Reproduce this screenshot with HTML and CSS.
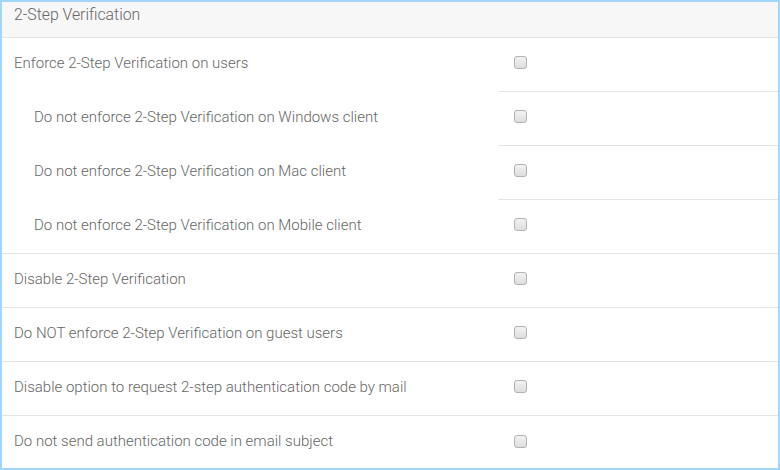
FILE: index.html
```html
<!DOCTYPE html>
<html>
<head>
<meta charset="utf-8">
<link rel="stylesheet" href="styles.css">
</head>
<body>
<div class="panel">
  <div class="header">2-Step Verification</div>
  <div class="row group">
    <div class="label">Enforce 2-Step Verification on users</div>
    <div class="ctrl"><input type="checkbox" class="cb"></div>
  </div>
  <div class="row group">
    <div class="label sub">Do not enforce 2-Step Verification on Windows client</div>
    <div class="ctrl"><input type="checkbox" class="cb"></div>
  </div>
  <div class="row group">
    <div class="label sub">Do not enforce 2-Step Verification on Mac client</div>
    <div class="ctrl"><input type="checkbox" class="cb"></div>
  </div>
  <div class="row">
    <div class="label sub">Do not enforce 2-Step Verification on Mobile client</div>
    <div class="ctrl"><input type="checkbox" class="cb"></div>
  </div>
  <div class="row">
    <div class="label">Disable 2-Step Verification</div>
    <div class="ctrl"><input type="checkbox" class="cb"></div>
  </div>
  <div class="row">
    <div class="label">Do NOT enforce 2-Step Verification on guest users</div>
    <div class="ctrl"><input type="checkbox" class="cb"></div>
  </div>
  <div class="row">
    <div class="label">Disable option to request 2-step authentication code by mail</div>
    <div class="ctrl"><input type="checkbox" class="cb"></div>
  </div>
  <div class="row last">
    <div class="label">Do not send authentication code in email subject</div>
    <div class="ctrl"><input type="checkbox" class="cb"></div>
  </div>
</div>
</body>
</html>
```
FILE: styles.css
```css
html, body {
  margin: 0;
  padding: 0;
  background: #fff;
}
.panel {
  width: 780px;
  height: 470px;
  box-sizing: border-box;
  border: 2px solid #a2d5fb;
  overflow: hidden;
  font-family: Roboto, "Liberation Sans", sans-serif;
  font-weight: 300;
  font-size: 15px;
  color: #666;
}
.header {
  box-sizing: border-box;
  border-bottom: 1px solid #e4e4e4;
  background: #f7f7f7;
  padding-left: 12px;
  line-height: 26px;
  height: 36px;
  font-size: 15.8px;
}
.row {
  display: grid;
  grid-template-columns: 496px 1fr;
  height: 54px;
}
.row > div {
  box-sizing: border-box;
  border-bottom: 1px solid #e4e4e4;
  display: flex;
  align-items: center;
  padding-bottom: 4px;
}
.row.group > .label {
  border-bottom-color: transparent;
}
.row.last {
  height: 52px;
}
.row.last > div {
  border-bottom: none;
  padding-bottom: 2px;
}
.label {
  padding-left: 12px;
}
.label.sub {
  padding-left: 32px;
}
.ctrl {
  padding-left: 16px;
}
.cb {
  appearance: none;
  -webkit-appearance: none;
  margin: 0;
  width: 13px;
  height: 13px;
  box-sizing: border-box;
  border: 1px solid #b2b2b2;
  border-radius: 3px;
  background: linear-gradient(#f2f2f2, #dedede);
}
```
